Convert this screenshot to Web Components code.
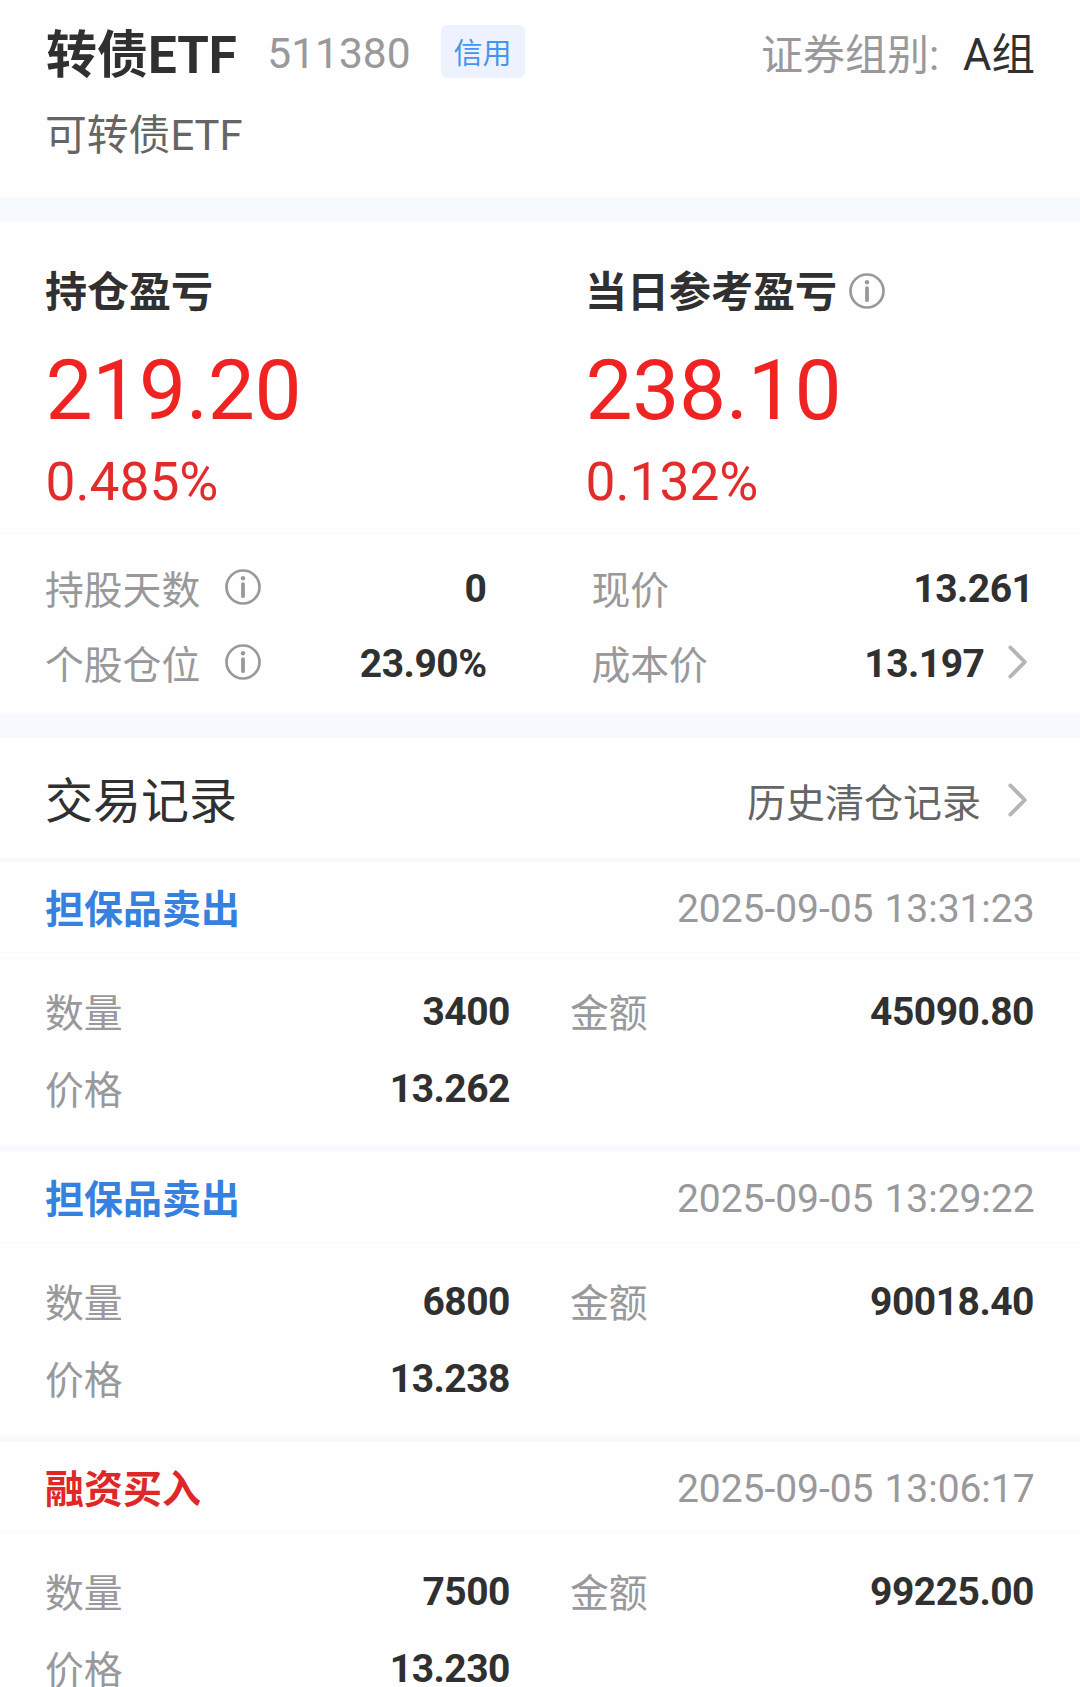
<!DOCTYPE html>
<html lang="zh-CN">
<head>
<meta charset="utf-8">
<meta name="viewport" content="width=device-width">
<title>转债ETF</title>
<style>
html,body{margin:0;height:1687px;overflow:hidden;background:#fefefe}
body{font-family:Roboto,"Noto Sans CJK SC",sans-serif;color:#303030}
</style>
</head>
<body>
<position-page></position-page>
<script>
const define = (name, html, setup) => {
  const template = document.createElement('template');
  template.innerHTML = html;
  customElements.define(name, class extends HTMLElement {
    constructor() {
      super();
      this.attachShadow({ mode: 'open' }).append(template.content.cloneNode(true));
    }
    connectedCallback() { if (setup) setup(this, this.shadowRoot); }
  });
};

define('info-icon', `
<style>:host{display:block;width:36px;height:36px;flex:none}svg{display:block}</style>
<svg width="36" height="36" viewBox="0 0 36 36" fill="none" stroke="#99989a">
  <circle cx="18" cy="18" r="16.5" stroke-width="2.7"/>
  <circle cx="18" cy="9.2" r="2.2" fill="#99989a" stroke="none"/>
  <path d="M18 15.2V27.2" stroke-width="3.8" stroke-linecap="round"/>
</svg>`);

define('chevron-icon', `
<style>:host{display:block;width:20px;height:34px;flex:none}svg{display:block}</style>
<svg width="20" height="34" viewBox="0 0 20 34" fill="none" stroke="#b6b4b7" stroke-width="3.9" stroke-linecap="round" stroke-linejoin="round">
  <path d="M2.4 2.5L16.8 17L2.4 31.5"/>
</svg>`);

define('credit-tag', `
<style>:host{display:flex;align-items:center;justify-content:center;box-sizing:border-box;width:84px;height:53px;padding-top:5px;border-radius:6px;background:#edf2fe;color:#4596ea;font-size:29px;line-height:34px}</style>
<slot></slot>`);

define('security-header', `
<style>
:host{display:block;box-sizing:border-box;height:197px;padding:25px 46px 0}
.row{display:flex;align-items:center;height:53px}
.name{font-size:51px;font-weight:700;line-height:59px;padding-top:7px}
.code{font-size:42.5px;line-height:50px;color:#99989a;margin:0 30px 0 30.5px;padding-top:5px}
.group{font-size:42px;line-height:50px;color:#99989a;margin:0 -1px 0 auto;padding-top:8px;display:flex;gap:24px}
.group b{font-weight:400;font-size:43.5px;color:#303030}
.kind{font-size:41.8px;line-height:50px;color:#656565;margin:33px 0 0 -1px}
</style>
<div class="row">
  <div class="name"><slot name="name"></slot></div>
  <div class="code"><slot name="code"></slot></div>
  <credit-tag><slot name="tag"></slot></credit-tag>
  <div class="group"><span>证券组别:</span><b><slot name="group"></slot></b></div>
</div>
<div class="kind"><slot name="kind"></slot></div>`);

define('section-band', `<style>:host{display:block;height:24px;background:#f6faff}</style>`);

define('profit-figure', `
<style>
:host{display:block;flex:1}
.title{display:flex;align-items:center;gap:12px;height:50px;margin-left:-1px;font-size:42px;line-height:50px;font-weight:700}
.text{padding-top:3px}
.amount{font-size:83.8px;letter-spacing:-.3px;line-height:98px;color:#f02323;margin:25px 0 0 -.5px}
.rate{font-size:53.3px;line-height:64px;color:#e22c2c;margin:11px 0 0 -.5px}
</style>
<div class="title"><span class="text"><slot name="title"></slot></span><slot name="icon"></slot></div>
<div class="amount"><slot name="amount"></slot></div>
<div class="rate"><slot name="rate"></slot></div>`);

define('profit-summary', `
<style>:host{display:flex;box-sizing:border-box;height:313px;padding:45px 0 0 46px;border-bottom:1px solid #f9f9fa}::slotted(*){flex:1}::slotted(:first-child){flex:none;width:540px}</style>
<slot></slot>`);

define('label-value', `
<style>
:host{display:flex;align-items:center;height:46px;font-size:39px;line-height:46px}
.label{color:#99989a;margin-left:-1px;padding-top:3px;font-size:38.8px}
.icon{display:block;margin:-5px 0 0 25px}
.value{margin-left:auto;font-weight:700;letter-spacing:-.5px;color:#303030}
</style>
<span class="label"></span><span class="icon"><slot name="icon"></slot></span><span class="value"></span><slot name="end"></slot>`,
(el, root) => {
  root.querySelector('.label').textContent = el.getAttribute('label');
  root.querySelector('.value').textContent = el.getAttribute('value');
});

define('holding-stats', `
<style>:host{display:grid;grid-template-columns:440.5px 441px;grid-auto-rows:46px;align-content:start;column-gap:106px;row-gap:29px;box-sizing:border-box;height:180px;padding:32px 45px 0 46px}</style>
<slot></slot>`);

define('records-heading', `
<style>
:host{display:flex;align-items:center;box-sizing:border-box;height:124px;padding:4px 52px 0 46px;border-bottom:4px solid #f6faff}
.title{font-size:48px;line-height:56px;color:#303030;margin-left:-1px;padding-top:4px}
.link{display:flex;align-items:center;gap:27px;margin-left:auto;font-size:39px;line-height:46px;color:#656565}
.text{padding-top:8px}
</style>
<div class="title"><slot></slot></div>
<div class="link"><span class="text"><slot name="link"></slot></span><chevron-icon></chevron-icon></div>`);

define('trade-record', `
<style>
:host{display:block;box-sizing:border-box;height:290px;border-bottom:6px solid #f6faff;--side:#3680df}
:host([side="buy"]){--side:#e02727}
header{display:flex;justify-content:space-between;align-items:center;box-sizing:border-box;height:91px;padding:3px 45.5px 0 46px;border-bottom:1px solid #fafafb;font-size:39px;line-height:46px}
.kind{font-weight:700;color:var(--side);margin-left:-1px;padding-top:2px}
time{color:#99989a;letter-spacing:-.05px;word-spacing:1.5px}
.grid{display:grid;grid-template-columns:464px 463px;column-gap:61px;row-gap:31px;padding:36px 46px 0}
</style>
<header><span class="kind"></span><time></time></header>
<div class="grid">
  <label-value class="q" label="数量"></label-value>
  <label-value class="m" label="金额"></label-value>
  <label-value class="p" label="价格"></label-value>
</div>`,
(el, root) => {
  const get = n => el.getAttribute(n);
  root.querySelector('.kind').textContent = get('kind');
  root.querySelector('time').textContent = get('time');
  for (const [c, n] of [['.q', 'quantity'], ['.m', 'amount'], ['.p', 'price']]) {
    const cell = root.querySelector(c);
    cell.setAttribute('value', get(n));
    cell.connectedCallback();
  }
});

define('position-page', `
<style>:host{display:block;width:1080px;height:1687px;overflow:hidden;background:#fefefe}</style>
<security-header>
  <span slot="name">转债ETF</span><span slot="code">511380</span><span slot="tag">信用</span>
  <span slot="group">A组</span><span slot="kind">可转债ETF</span>
</security-header>
<section-band></section-band>
<profit-summary>
  <profit-figure><span slot="title">持仓盈亏</span><span slot="amount">219.20</span><span slot="rate">0.485%</span></profit-figure>
  <profit-figure><span slot="title">当日参考盈亏</span><info-icon slot="icon"></info-icon><span slot="amount">238.10</span><span slot="rate">0.132%</span></profit-figure>
</profit-summary>
<holding-stats>
  <label-value label="持股天数" value="0"><info-icon slot="icon"></info-icon></label-value>
  <label-value label="现价" value="13.261"></label-value>
  <label-value label="个股仓位" value="23.90%"><info-icon slot="icon"></info-icon></label-value>
  <label-value label="成本价" value="13.197"><chevron-icon slot="end" style="margin:-5px 6px 0 23px"></chevron-icon></label-value>
</holding-stats>
<section-band></section-band>
<records-heading>交易记录<span slot="link">历史清仓记录</span></records-heading>
<trade-record kind="担保品卖出" time="2025-09-05 13:31:23" quantity="3400" amount="45090.80" price="13.262"></trade-record>
<trade-record kind="担保品卖出" time="2025-09-05 13:29:22" quantity="6800" amount="90018.40" price="13.238"></trade-record>
<trade-record side="buy" kind="融资买入" time="2025-09-05 13:06:17" quantity="7500" amount="99225.00" price="13.230"></trade-record>`);
</script>
</body>
</html>
